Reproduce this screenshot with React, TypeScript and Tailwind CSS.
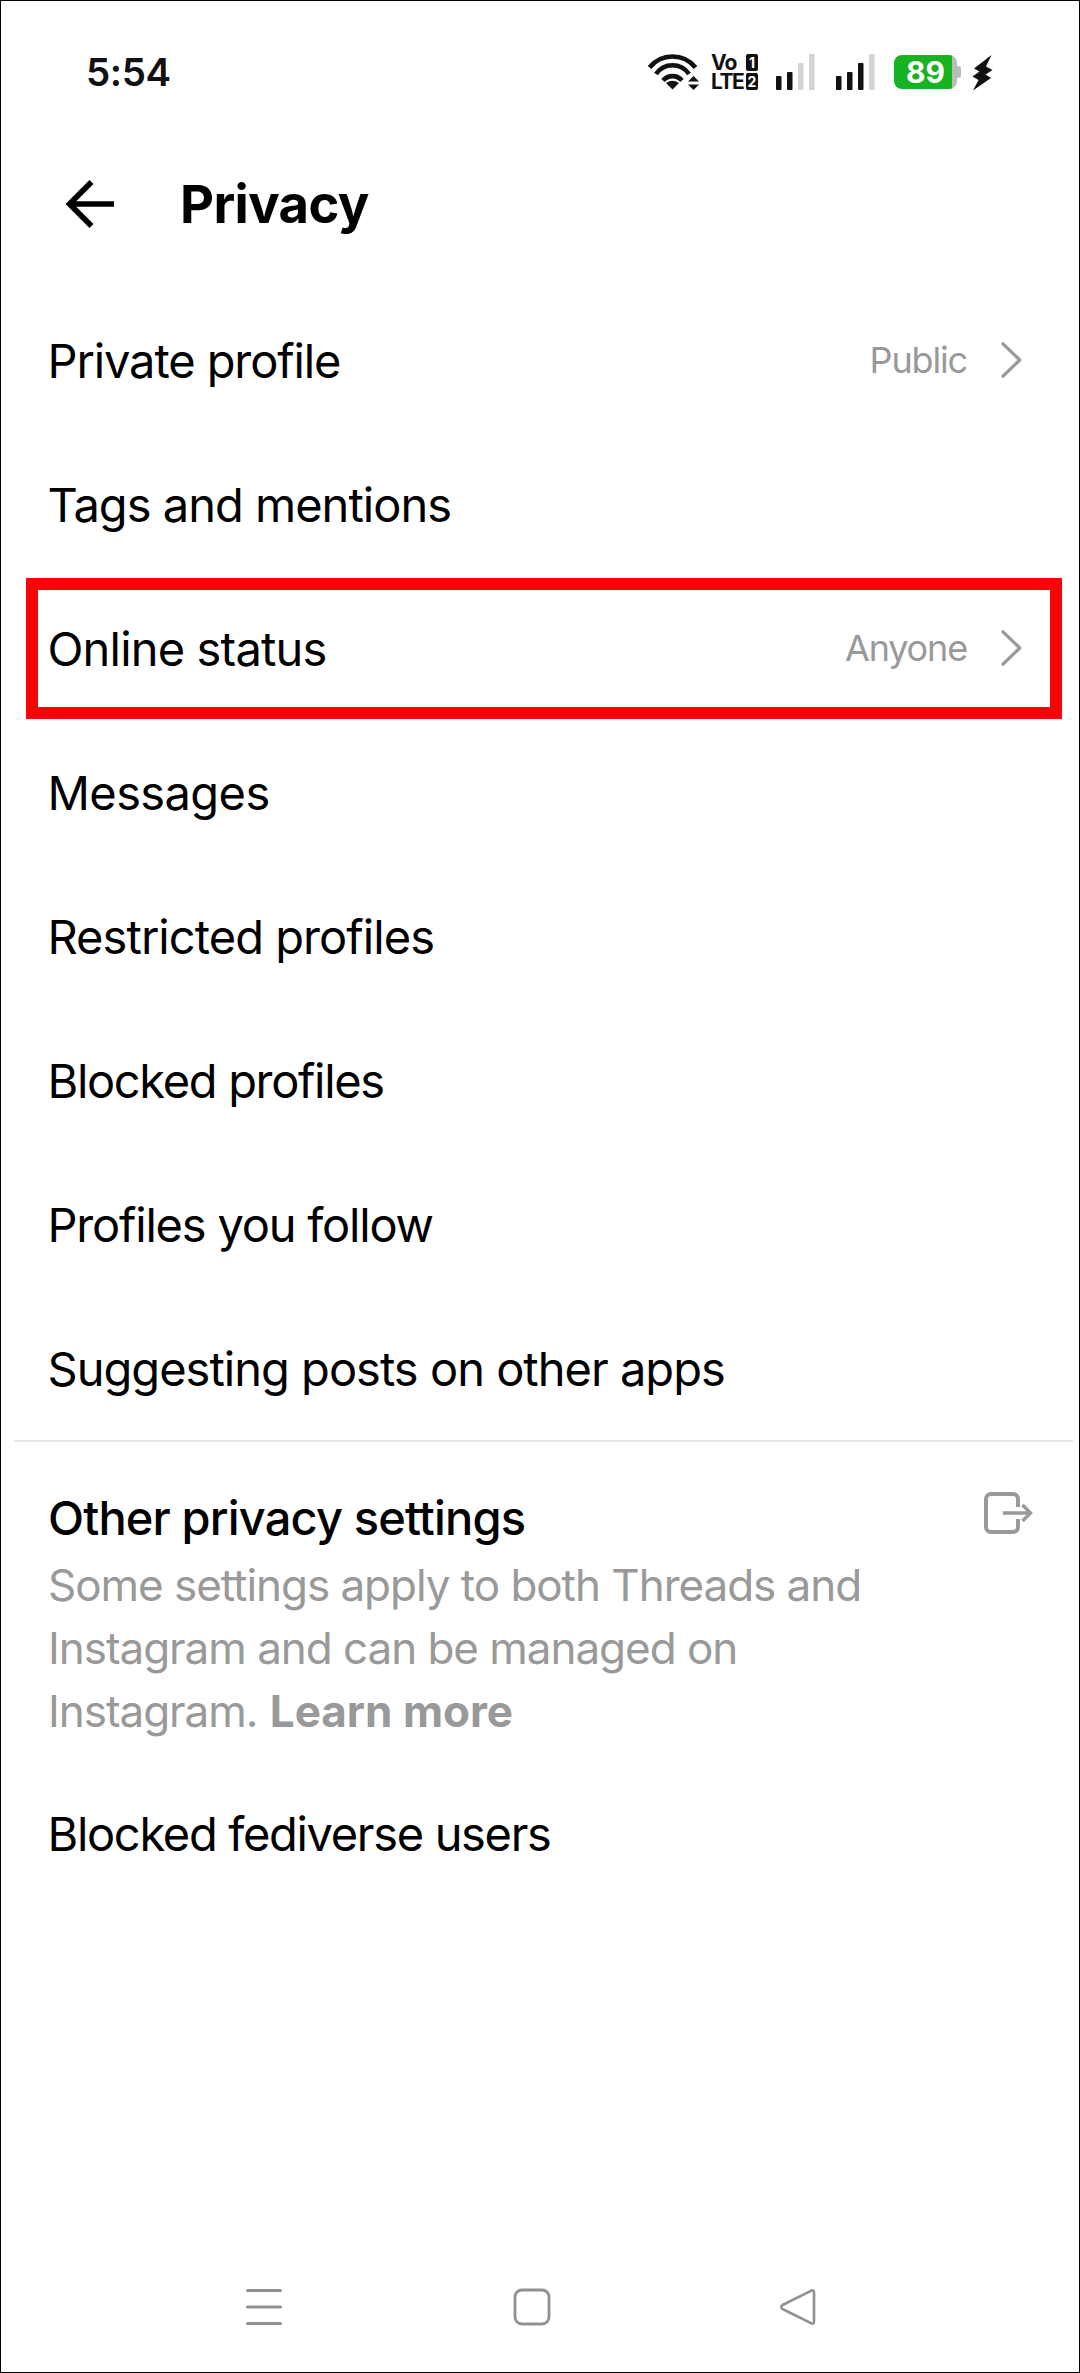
type Row = { label: string; tracking: string; value?: string; highlighted?: boolean };

const rows: Row[] = [
  { label: 'Private profile', tracking: 'tracking-[-1.1px]', value: 'Public' },
  { label: 'Tags and mentions', tracking: 'tracking-[-0.98px]' },
  { label: 'Online status', tracking: 'tracking-[-0.82px]', value: 'Anyone', highlighted: true },
  { label: 'Messages', tracking: 'tracking-[-0.6px]' },
  { label: 'Restricted profiles', tracking: 'tracking-[-0.94px]' },
  { label: 'Blocked profiles', tracking: 'tracking-[-1.33px]' },
  { label: 'Profiles you follow', tracking: 'tracking-[-1.2px]' },
  { label: 'Suggesting posts on other apps', tracking: 'tracking-[-0.98px]' },
];

function WifiIcon() {
  return (
    <svg width="55" height="40" viewBox="0 0 55 40" fill="none" stroke="#111" strokeWidth="4.6">
      <path d="M3.5 15.5A29.5 29.5 0 0 1 49.5 15.5" />
      <path d="M10 22A20 20 0 0 1 43 22" />
      <path d="M17 28.5A12.5 12.5 0 0 1 36 28.5" />
      <path d="M20 31Q26.5 26.5 33 31L26.5 37.5Z" fill="#111" stroke="none" />
      <path d="M42 29.5L47.5 24L53 29.5ZM42 32.5L47.5 38L53 32.5Z" fill="#111" stroke="none" />
    </svg>
  );
}

function VolteIcon() {
  return (
    <div className="ml-[10px] flex w-[47px] flex-col gap-[2px] text-[21px] leading-[17px] font-bold text-[#111]">
      <div className="flex justify-between">
        <span className="tracking-[-0.8px]">Vo</span>
        <span className="h-[17px] w-3 rounded-[2px] bg-[#111] text-center text-[14px] text-white">1</span>
      </div>
      <div className="flex justify-between">
        <span className="w-[34px] tracking-[-1.5px]">LTE</span>
        <span className="h-[17px] w-3 rounded-[2px] bg-[#111] text-center text-[14px] text-white">2</span>
      </div>
    </div>
  );
}

function SignalIcon({ level }: { level: number }) {
  const bars = [
    { x: 1, y: 24 },
    { x: 12, y: 20 },
    { x: 23, y: 11 },
    { x: 34, y: 2 },
  ];
  return (
    <svg width="41" height="40" viewBox="0 0 41 40">
      {bars.map((b, i) => (
        <rect key={b.x} x={b.x} y={b.y} width="5.5" height={38 - b.y} rx="1" fill={i < level ? '#111' : '#d4d4d4'} />
      ))}
    </svg>
  );
}

function Battery() {
  return (
    <div className="ml-[18px] flex items-center">
      <div className="flex h-[34px] w-[63px] items-center justify-center overflow-hidden rounded-[8px] bg-linear-to-r from-[#17b321] from-92% to-[#b5bdb5] to-92% text-[30px] leading-none font-bold text-white">
        89
      </div>
      <div className="h-3 w-1 rounded-r-[3px] bg-[#b5bdb5]" />
    </div>
  );
}

function Chevron() {
  return (
    <svg className="ml-8" width="24" height="40" viewBox="0 0 24 40" fill="none" stroke="#999" strokeWidth="3.2" strokeLinecap="round" strokeLinejoin="round">
      <path d="M4 3.8L20.8 20L4 36.2" />
    </svg>
  );
}

function SettingRow({ label, tracking, value, highlighted }: Row) {
  return (
    <div className="relative flex h-36 items-center justify-between pr-[56px] pl-[46.5px]">
      <span className={`text-[47px] leading-none whitespace-nowrap ${tracking}`}>{label}</span>
      {value && (
        <div className="flex items-center text-[36px] leading-none tracking-[-1.15px] text-[#999]">
          {value}
          <Chevron />
        </div>
      )}
      {highlighted && <div className="absolute top-[2px] right-[17px] left-[25px] h-[141px] border-[12px] border-[#ff0008]" />}
    </div>
  );
}

export default function App() {
  return (
    <div className="flex h-[2373px] w-[1080px] flex-col border border-black bg-white font-['Inter',sans-serif] text-black">
      <div className="flex h-[142px] items-center pr-[85px] pl-[85px]">
        <span className="text-[38.5px] leading-none font-semibold tracking-[-0.4px] text-[#111]">5:54</span>
        <div className="ml-auto flex items-center">
          <WifiIcon />
          <VolteIcon />
          <div className="ml-[17px] flex gap-[19px]">
            <SignalIcon level={2} />
            <SignalIcon level={3} />
          </div>
          <Battery />
          <svg className="ml-[10px]" width="23" height="40" viewBox="0 0 23 40" fill="#111">
            <path d="M20.5 3L3 16.5L8.5 19.5L1.5 24.5L7.5 28L2 38.5L20 26L14.5 22.5L21.5 18L15 14.5Z" />
          </svg>
        </div>
      </div>

      <header className="flex h-[122px] items-center pl-[63px]">
        <svg width="52" height="52" viewBox="0 0 52 52" fill="none" stroke="#000" strokeWidth="5.6">
          <path d="M50 26H6M27.5 4L5.5 26L27.5 48" />
        </svg>
        <h1 className="ml-[64px] text-[52.5px] leading-none font-bold tracking-[-0.6px]">Privacy</h1>
      </header>

      <div className="pt-[23px]">
        {rows.map((row) => (
          <SettingRow key={row.label} {...row} />
        ))}
      </div>

      <div className="mr-[6px] ml-[13px] h-0.5 bg-[#e6e6e6]" />

      <section className="flex justify-between pt-[45px] pr-[45px] pl-[47px]">
        <div>
          <h2 className="text-[47px] leading-[62px] font-medium tracking-[-0.84px]">Other privacy settings</h2>
          <p className="mt-[5px] w-[850px] text-[44px] leading-[63px] tracking-[-1.04px] text-[#999]">
            Some settings apply to both Threads and
            <br />
            Instagram and can be managed on
            <br />
            Instagram. <span className="ml-px font-bold tracking-normal">Learn more</span>
          </p>
        </div>
        <svg className="mt-[2px]" width="52" height="48" viewBox="0 0 52 48" fill="none" stroke="#999" strokeWidth="4">
          <path d="M36 18V10a5 5 0 0 0-5-5H9a5 5 0 0 0-5 5V38a5 5 0 0 0 5 5H31a5 5 0 0 0 5-5V30" />
          <path d="M21 24H48M40.5 16L48.5 24L40.5 32" strokeWidth="3.4" />
        </svg>
      </section>

      <div className="mt-[18px] flex h-36 items-center pl-[46.5px] text-[47px] leading-none tracking-[-1.32px]">
        Blocked fediverse users
      </div>

      <nav className="mt-auto mb-[45px] flex h-10 items-center pl-[243px]">
        <svg width="40" height="40" viewBox="0 0 40 40" stroke="#919191" strokeWidth="3" strokeLinecap="round">
          <path d="M3.5 3.5H36.5M3.5 20H36.5M3.5 36.5H36.5" />
        </svg>
        <svg className="ml-[228px]" width="40" height="40" viewBox="0 0 40 40" fill="none" stroke="#919191" strokeWidth="2.8">
          <rect x="3" y="3" width="34" height="34" rx="7" />
        </svg>
        <svg className="ml-[226px]" width="40" height="40" viewBox="0 0 40 40" fill="none" stroke="#919191" strokeWidth="2.6" strokeLinejoin="round">
          <path d="M33.5 3.6Q36 2.5 36 5.5V34.5Q36 37.5 33.5 36.4L4.5 22Q2 20 4.5 18Z" />
        </svg>
      </nav>
    </div>
  );
}
